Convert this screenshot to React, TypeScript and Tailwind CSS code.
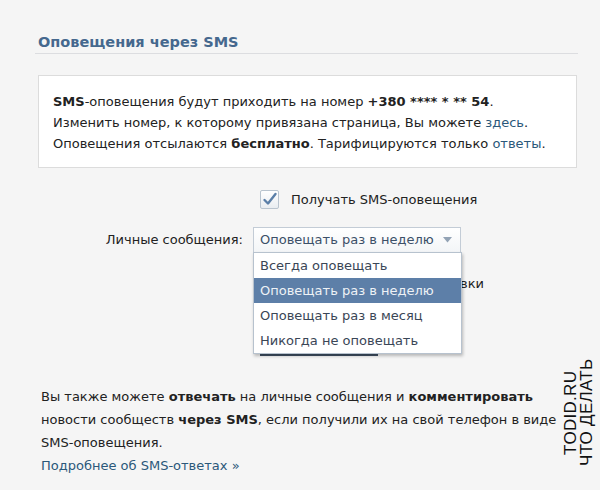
import React from "react";

const body = { fontFamily: '"DejaVu Sans", Verdana, sans-serif' };

function Check() {
  return (
    <div className="w-[19px] h-[19px] rounded-[2px] border border-[#b9c4cf] bg-gradient-to-b from-[#ffffff] to-[#e9edf1] flex items-center justify-center">
      <svg width="17" height="17" viewBox="0 0 17 17">
        <path d="M3.5 9 L7 12.5 L14.5 3" fill="none" stroke="#5b7fa8" strokeWidth="2.4" strokeLinecap="round" strokeLinejoin="round" />
      </svg>
    </div>
  );
}

export default function App() {
  const items = ["Всегда оповещать", "Оповещать раз в неделю", "Оповещать раз в месяц", "Никогда не оповещать"];
  return (
    <div className="relative w-[600px] h-[490px] overflow-hidden bg-[#f5f5f5] text-[#222]" style={body}>
      <div className="pl-[35px] w-[578px]">
        <div className="mt-[32px] pl-[3px] pb-[1px] leading-[20px] border-b border-[#dcdde0] text-[14.5px] font-bold text-[#45688e]">
          Оповещения через SMS
        </div>

        <div className="mt-[21px] ml-[3px] w-[539px] bg-white border border-[#dcdcdc] pl-[14px] pt-[15px] pb-[13px] text-[13px] leading-[21px]">
          <div>
            <b>SMS</b>-оповещения будут приходить на номер <b>+380 **** * ** 54</b>.
          </div>
          <div>
            Изменить номер, к которому привязана страница, Вы можете <span className="text-[#2b587a]">здесь</span>.
          </div>
          <div>
            Оповещения отсылаются <b>бесплатно</b>. Тарифицируются только <span className="text-[#2b587a]">ответы</span>.
          </div>
        </div>

        <div className="mt-[22px] ml-[225px] flex items-center gap-[12px] text-[13px] leading-[19px]">
          <Check />
          <span>Получать SMS-оповещения</span>
        </div>

        <div className="mt-[18px] flex items-center text-[13px]">
          <div className="w-[208px] text-right leading-[26px]">Личные сообщения:</div>
          <div className="relative ml-[10px]">
            <div className="w-[208px] h-[26px] border border-[#c3ccd6] bg-gradient-to-b from-white to-[#f3f5f7] flex items-center justify-between pl-[6px] pr-[8px] text-[#3c5068]">
              <span>Оповещать раз в неделю</span>
              <svg width="9" height="6" viewBox="0 0 9 6">
                <path d="M0 0 H9 L4.5 5.5 Z" fill="#93a3b5" />
              </svg>
            </div>
            <div className="absolute left-0 top-[25px] z-10 w-[209px] bg-white border border-[#b7c2ce] shadow-[1px_2px_3px_rgba(0,0,0,0.25)]">
              {items.map((t, i) => (
                <div
                  key={t}
                  className={
                    i === 1
                      ? "h-[25px] leading-[25px] pl-[6px] bg-[#5d7fa8] text-[#eef2f6]"
                      : "h-[25px] leading-[25px] pl-[6px] text-[#3a4656]"
                  }
                >
                  {t}
                </div>
              ))}
            </div>
          </div>
        </div>

        <div className="mt-[21px] w-[449px] text-right text-[13px] leading-[20px]">
          Оповещать о статусе заявки
        </div>

        <div className="mt-[36px] ml-[225px] flex">
          <div className="w-[118px] h-[26px] bg-[#5e81a8] border-b-2 border-[#3f4f62]" />
        </div>

        <div className="mt-[29px] ml-[6px] text-[13px] leading-[23px]">
          <div>
            Вы также можете <b>отвечать</b> на личные сообщения и <b>комментировать</b>
          </div>
          <div>
            новости сообществ <b>через SMS</b>, если получили их на свой телефон в виде
          </div>
          <div>SMS-оповещения.</div>
          <div className="text-[#2b587a]">Подробнее об SMS-ответах »</div>
        </div>
      </div>

      <div
        className="absolute left-[563px] top-[350px] h-[125px] rotate-180 [writing-mode:vertical-rl] text-center text-[17px] leading-[15.5px] text-[#111] tracking-[0.3px]"
        style={{ fontFamily: '"Liberation Sans", Arial, sans-serif' }}
      >
        <div>TODID.RU</div>
        <div>ЧТО ДЕЛАТЬ</div>
      </div>
    </div>
  );
}
